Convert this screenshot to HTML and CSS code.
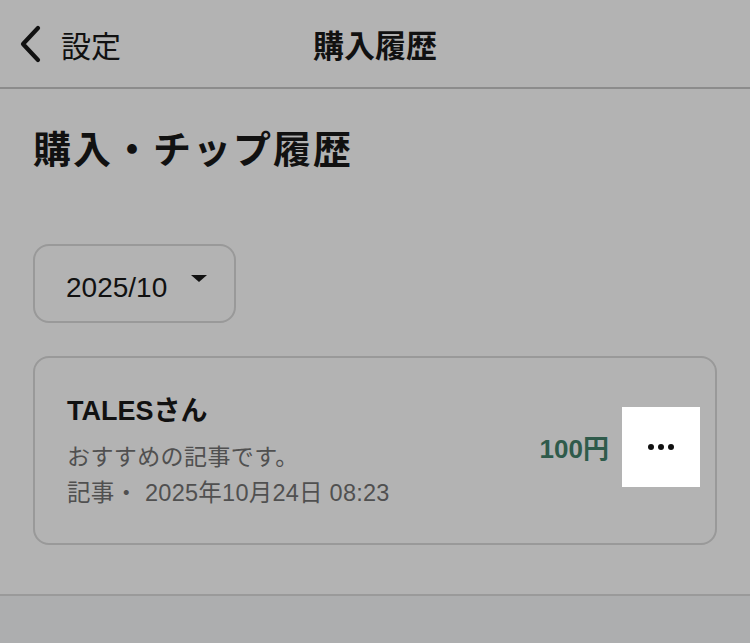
FILE: index.html
```html
<!DOCTYPE html>
<html lang="ja">
<head>
  <meta charset="UTF-8" />
  <meta name="viewport" content="width=device-width, initial-scale=1.0"/>
  <title>購入履歴</title>
  <link rel="stylesheet" href="styles.css">
</head>
<body>
<div class="screen">
  <header class="nav">
    <a class="back" href="#">
      <svg class="back-icon" width="24" height="38" viewBox="0 0 24 38">
        <path d="M20 3 L5 19 L20 35" fill="none" stroke="#111" stroke-width="4.2" stroke-linecap="round" stroke-linejoin="round"/>
      </svg>
      <span>設定</span>
    </a>
    <h1 class="nav-title">購入履歴</h1>
  </header>

  <main class="content">
    <h2 class="page-title">購入・チップ履歴</h2>

    <button class="month-select">
      <span>2025/10</span>
      <svg class="caret" width="16" height="8" viewBox="0 0 16 8">
        <path d="M0 0 H16 L8 7 Z" fill="#111"/>
      </svg>
    </button>

    <div class="history-card">
      <div class="history-info">
        <div class="history-name">TALESさん</div>
        <div class="history-desc">おすすめの記事です。</div>
        <div class="history-meta">記事・ 2025年10月24日 08:23</div>
      </div>
      <div class="history-price">100円</div>
      <button class="more-btn" aria-label="メニュー">
        <svg width="26" height="6" viewBox="0 0 26 6">
          <circle cx="3" cy="3" r="3" fill="#111"/>
          <circle cx="13" cy="3" r="3" fill="#111"/>
          <circle cx="23" cy="3" r="3" fill="#111"/>
        </svg>
      </button>
    </div>
  </main>

  <div class="bottom-bar"></div>
</div>
</body>
</html>
```

FILE: styles.css
```css
body {
  margin: 0;
  font-family: "Liberation Sans", "Noto Sans CJK JP", sans-serif;
  background: #b3b3b3;
  color: #111;
}
.screen {
  width: 750px;
  height: 643px;
  display: flex;
  flex-direction: column;
}
.nav {
  height: 87px;
  border-bottom: 2px solid #8c8c8c;
  display: flex;
  align-items: center;
  position: relative;
}
.back {
  display: flex;
  align-items: center;
  gap: 19px;
  padding-left: 18px;
  color: #111;
  text-decoration: none;
  font-size: 30px;
}
.back-icon {
  display: block;
}
.nav-title {
  position: absolute;
  left: 0;
  right: 0;
  margin: 0;
  text-align: center;
  font-size: 31px;
  font-weight: bold;
  pointer-events: none;
}
.content {
  flex: 1;
  padding: 0 33px;
}
.page-title {
  margin: 33px 0 0;
  font-size: 38px;
  line-height: 56px;
  font-weight: bold;
  letter-spacing: 2px;
}
.month-select {
  margin-top: 66px;
  width: 203px;
  height: 79px;
  border: 2px solid #999;
  border-radius: 16px;
  background: transparent;
  display: flex;
  align-items: center;
  padding: 0 26px 0 31px;
  gap: 24px;
  font-family: inherit;
  font-size: 28px;
  color: #111;
}
.month-select span {
  padding-top: 8px;
}
.caret {
  margin-top: -10px;
}
.history-card {
  margin-top: 33px;
  height: 189px;
  box-sizing: border-box;
  border: 2px solid #999;
  border-radius: 16px;
  display: flex;
  align-items: center;
  padding: 0 15px 0 32px;
}
.history-info {
  flex: 1;
  padding-top: 4px;
}
.history-name {
  font-size: 27px;
  font-weight: bold;
  line-height: 32px;
}
.history-desc,
.history-meta {
  font-size: 23px;
  color: #505050;
  line-height: 36px;
}
.history-desc {
  margin-top: 12px;
  letter-spacing: 0.4px;
}
.history-meta {
  font-size: 23.5px;
  letter-spacing: 0.25px;
}
.history-price {
  font-size: 26px;
  font-weight: bold;
  color: #2f5b4b;
  margin-right: 13px;
  margin-top: -8px;
}
.more-btn {
  width: 78px;
  height: 80px;
  border: none;
  background: #fff;
  display: flex;
  align-items: center;
  justify-content: center;
  margin-top: -8px;
}
.bottom-bar {
  height: 47px;
  border-top: 2px solid #9a9a9a;
  background: #adaeaf;
}
```
